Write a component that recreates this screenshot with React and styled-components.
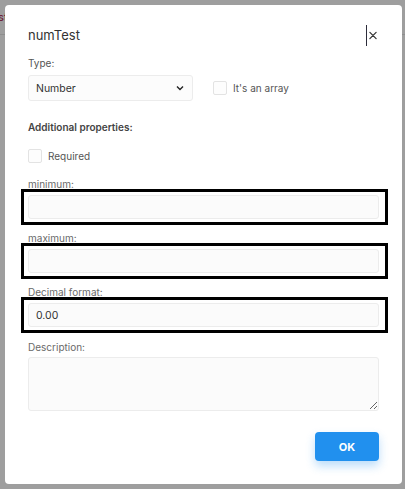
import React from 'react'
import styled, { createGlobalStyle } from 'styled-components'

const GlobalStyle = createGlobalStyle`
  html, body {
    margin: 0;
    padding: 0;
    height: 100%;
    background: #ffffff;
    font-family: Inter, "Noto Sans", "Liberation Sans", sans-serif;
  }
  * { box-sizing: border-box; }
`

const Page = styled.div`
  height: 100vh;
  overflow: hidden;
`

const PageHeader = styled.div`
  height: 35px;
  border-bottom: 1px solid #e6e6e6;
  display: flex;
  align-items: center;
  h2 {
    margin: 0 0 0 -37px;
    font-size: 11px;
    font-weight: 500;
    color: #b23a62;
    white-space: nowrap;
  }
`

const Overlay = styled.div`
  position: fixed;
  inset: 0;
  background: rgba(0, 0, 0, 0.38);
  padding: 5px 3px 5px 5px;
  display: flex;
`

const Modal = styled.div`
  flex: 1;
  background: #fff;
  border-radius: 4px;
  padding: 22px 23px 0 23px;
  display: flex;
  flex-direction: column;
`

const Header = styled.div`
  display: flex;
  align-items: center;
  justify-content: space-between;
  height: 16px;
`

const Title = styled.h1`
  margin: 0;
  font-size: 13px;
  line-height: 16px;
  font-weight: 400;
  color: #333;
`

const CloseButton = styled.button`
  width: 11px;
  height: 21px;
  margin-right: 2px;
  padding: 0 0 0 2px;
  border: none;
  border-left: 1px solid #2c2c3a;
  background: none;
  display: flex;
  align-items: center;
  justify-content: center;
  cursor: pointer;
`

const Label = styled.div`
  font-size: 10px;
  line-height: 12px;
  color: ${p => (p.$light ? '#6a6a6a' : '#555')};
  margin-top: ${p => p.$top || 0}px;
`

const SectionTitle = styled.div`
  font-size: 10px;
  line-height: 12px;
  font-weight: 600;
  color: #444;
  margin-top: 20px;
`

const Row = styled.div`
  display: flex;
  align-items: center;
  gap: 20px;
  margin-top: 6px;
`

const Select = styled.div`
  width: 165px;
  height: 26px;
  border: 1px solid #ececec;
  border-radius: 3px;
  background: #fcfcfc;
  padding: 0 8px 0 7px;
  display: flex;
  align-items: center;
  justify-content: space-between;
  font-size: 10.5px;
  color: #333;
`

const CheckRow = styled.label`
  display: flex;
  align-items: center;
  gap: 6px;
  font-size: 10px;
  color: #555;
  margin-top: ${p => p.$top || 0}px;
`

const Box = styled.span`
  width: 14px;
  height: 14px;
  border: 1px solid #e3e3e3;
  border-radius: 2px;
  background: #fdfdfd;
`

const Outline = styled.div`
  margin: ${p => p.$top || 0}px -9px 0 -7px;
  border: 3px solid #000;
  padding: 3px 6px 3px 4px;
`

const Input = styled.div`
  height: 24px;
  border: 1px solid #ececec;
  border-radius: 3px;
  background: #fbfbfb;
  padding: 0 7px;
  display: flex;
  align-items: center;
  font-size: 10.5px;
  color: #333;
`

const TextArea = styled.textarea`
  display: block;
  width: 100%;
  height: 54px;
  margin-top: 4px;
  border: 1px solid #ececec;
  border-radius: 3px;
  background: #fbfbfb;
  resize: vertical;
  font-family: inherit;
  outline: none;
`

const Footer = styled.div`
  display: flex;
  justify-content: flex-end;
  margin-top: 21px;
`

const OkButton = styled.button`
  width: 64px;
  height: 29px;
  border: none;
  border-radius: 4px;
  background: #2190ee;
  color: #fff;
  font-family: inherit;
  font-size: 11px;
  font-weight: 700;
  box-shadow: 0 5px 10px rgba(33, 144, 238, 0.3);
  cursor: pointer;
`

function Field({ label, value, top }) {
  return (
    <>
      <Label $light $top={top}>{label}</Label>
      <Outline $top={-1}>
        <Input>{value}</Input>
      </Outline>
    </>
  )
}

export default function App() {
  return (
    <>
      <GlobalStyle />
      <Page>
        <PageHeader>
          <h2>numTest</h2>
        </PageHeader>
      </Page>
      <Overlay>
        <Modal>
          <Header>
            <Title>numTest</Title>
            <CloseButton aria-label="close">
              <svg width="9" height="9" viewBox="0 0 9 9">
                <path d="M1 1 L8 8 M8 1 L1 8" stroke="#333" strokeWidth="1.4" strokeLinecap="round" />
              </svg>
            </CloseButton>
          </Header>

          <Label $top={14}>Type:</Label>
          <Row>
            <Select>
              <span>Number</span>
              <svg width="8" height="6" viewBox="0 0 8 6">
                <path d="M1 1.5 L4 4.5 L7 1.5" fill="none" stroke="#222" strokeWidth="1.4" />
              </svg>
            </Select>
            <CheckRow>
              <Box />
              It's an array
            </CheckRow>
          </Row>

          <SectionTitle>Additional properties:</SectionTitle>
          <CheckRow $top={16}>
            <Box />
            Required
          </CheckRow>

          <Field label="minimum:" top={15} />
          <Field label="maximum:" top={7} />
          <Field label="Decimal format:" value="0.00" top={7} />

          <Label $light $top={8}>Description:</Label>
          <TextArea />

          <Footer>
            <OkButton>OK</OkButton>
          </Footer>
        </Modal>
      </Overlay>
    </>
  )
}
